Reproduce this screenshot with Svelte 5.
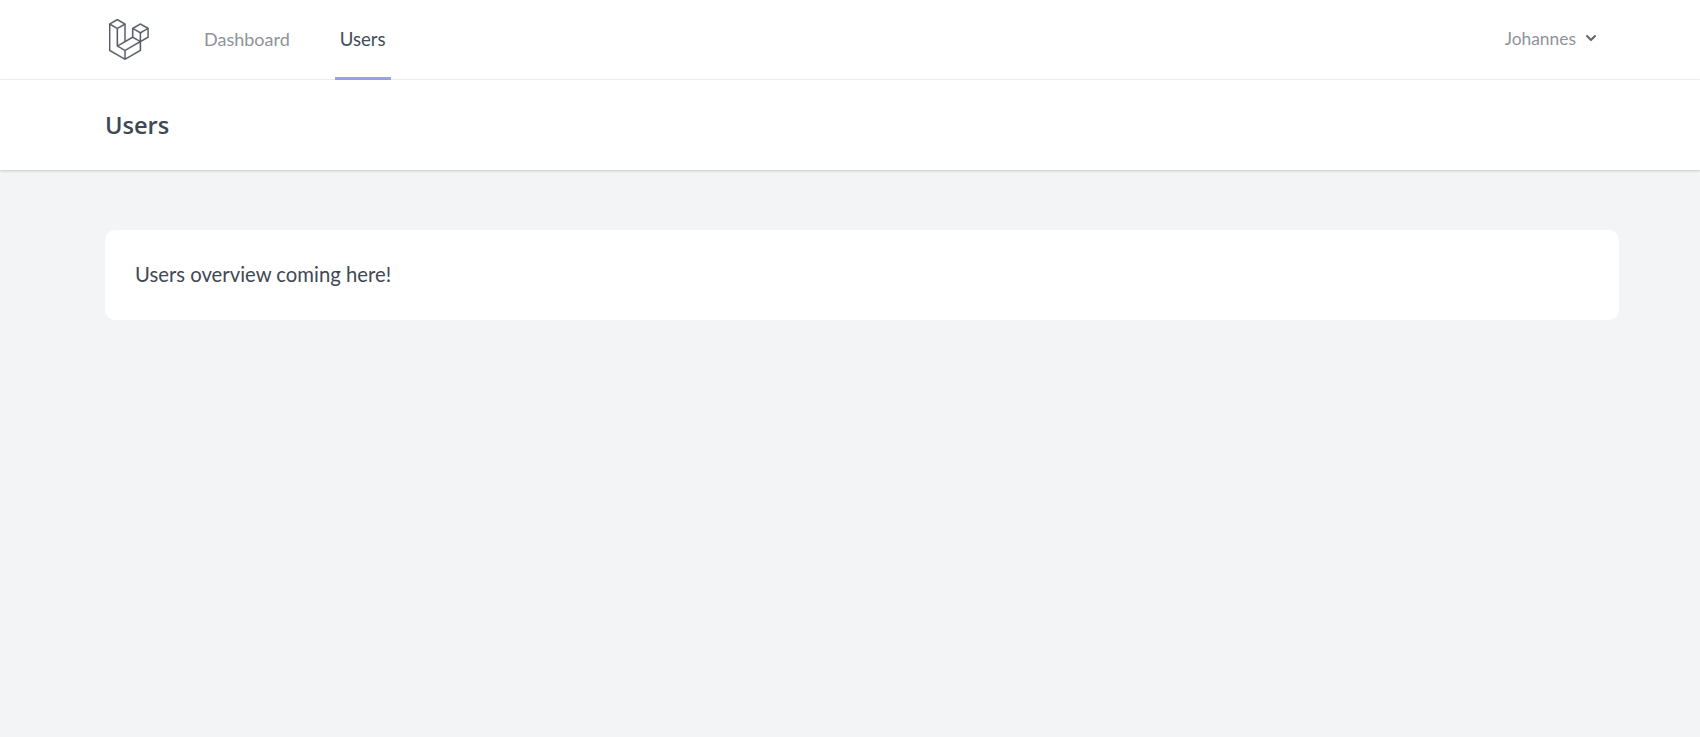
<script>
  const links = [
    { label: 'Dashboard', active: false },
    { label: 'Users', active: true }
  ];
</script>

<div class="page">
  <nav class="topbar">
    <div class="topbar-left">
      <a class="logo" href="/" aria-label="Home">
        <svg viewBox="0 0 50 52" width="40" height="41.6" fill="#555b66" stroke="#555b66" stroke-width="0.3">
          <path d="M49.626 11.564a.809.809 0 0 1 .028.209v10.972a.8.8 0 0 1-.402.694l-9.209 5.302V39.25c0 .286-.152.55-.4.694L20.42 51.01c-.044.025-.092.041-.14.058-.018.006-.035.017-.054.022a.805.805 0 0 1-.41 0c-.022-.006-.042-.018-.063-.026-.044-.016-.09-.03-.132-.054L.402 39.944A.801.801 0 0 1 0 39.25V6.334c0-.072.01-.142.028-.21.006-.023.02-.044.028-.067.015-.042.029-.085.051-.124.015-.026.037-.047.055-.071.023-.032.044-.065.071-.093.023-.023.053-.04.079-.06.029-.024.055-.05.088-.069h.001l9.61-5.533a.802.802 0 0 1 .8 0l9.61 5.533h.002c.032.02.059.045.088.068.026.02.055.038.078.06.028.029.048.062.072.094.017.024.04.045.054.071.023.04.036.082.052.124.008.023.022.044.028.068a.809.809 0 0 1 .028.209v20.559l8.008-4.611v-10.51c0-.07.01-.141.028-.208.007-.024.02-.045.028-.068.016-.042.03-.085.052-.124.015-.026.037-.047.054-.071.024-.032.044-.065.072-.093.023-.023.052-.04.078-.06.03-.024.056-.05.088-.069h.001l9.611-5.533a.801.801 0 0 1 .8 0l9.61 5.533c.034.02.06.045.09.068.025.02.054.038.077.06.028.029.048.062.072.094.018.024.04.045.054.071.023.039.036.082.052.124.009.023.022.044.028.068zm-1.574 10.718v-9.124l-3.363 1.936-4.646 2.675v9.124l8.01-4.611zm-9.61 16.505v-9.13l-4.57 2.61-13.05 7.448v9.216l17.62-10.144zM1.602 7.719v31.068L19.22 48.93v-9.214l-9.204-5.209-.003-.002-.004-.002c-.031-.018-.057-.044-.086-.066-.025-.02-.054-.036-.076-.058l-.002-.003c-.026-.025-.044-.056-.066-.084-.02-.027-.044-.05-.06-.078l-.001-.003c-.018-.03-.029-.066-.042-.1-.013-.03-.03-.058-.038-.09v-.001c-.01-.038-.012-.078-.016-.117-.004-.03-.012-.06-.012-.09v-.002-21.481L4.965 9.654 1.602 7.72zm8.81-5.994L2.405 6.334l8.005 4.609 8.006-4.61-8.006-4.608zm4.164 28.764l4.645-2.674V7.719l-3.363 1.936-4.646 2.675v20.096l3.364-1.937zM39.243 7.164l-8.006 4.609 8.006 4.609 8.005-4.61-8.005-4.608zm-.801 10.605l-4.646-2.675-3.363-1.936v9.124l4.645 2.674 3.364 1.937v-9.124zM20.02 38.33l11.743-6.704 5.87-3.35-8-4.606-9.211 5.303-8.395 4.833 7.993 4.524z" />
        </svg>
      </a>
      <ul class="links">
        {#each links as link}
          <li class="link" class:active={link.active}>{link.label}</li>
        {/each}
      </ul>
    </div>
    <button class="user" type="button">
      Johannes
      <svg viewBox="0 0 20 20" width="20" height="20" fill="#5f6670">
        <path fill-rule="evenodd" clip-rule="evenodd" d="M5.293 7.293a1 1 0 011.414 0L10 10.586l3.293-3.293a1 1 0 111.414 1.414l-4 4a1 1 0 01-1.414 0l-4-4a1 1 0 010-1.414z" />
      </svg>
    </button>
  </nav>

  <header class="page-header">
    <h1>Users</h1>
  </header>

  <main class="content">
    <div class="card">Users overview coming here!</div>
  </main>
</div>

<style>
  :global(body) {
    margin: 0;
    background: #f3f4f6;
  }

  .page {
    min-height: 737px;
    background: #f3f4f6;
    font-family: 'Lato', 'Open Sans', sans-serif;
    color: #3f4754;
  }

  .topbar {
    height: 79px;
    background: #fff;
    border-bottom: 1px solid #f1f2f4;
    display: flex;
    justify-content: space-between;
    padding: 0 99px 0 109px;
  }

  .topbar-left {
    display: flex;
    align-items: stretch;
  }

  .logo {
    display: flex;
    align-items: center;
  }

  .links {
    display: flex;
    list-style: none;
    margin: 0 0 0 50px;
    padding: 0;
    gap: 40px;
  }

  .link {
    display: flex;
    align-items: center;
    height: 80px;
    box-sizing: border-box;
    padding: 1px 5px 0;
    font-size: 18px;
    color: #8f9399;
    border-bottom: 3px solid transparent;
  }

  .link.active {
    color: #454c58;
    font-size: 18.6px;
    border-bottom-color: #9aa3ea;
  }

  .user {
    display: flex;
    align-items: center;
    gap: 5px;
    height: 76px;
    padding: 0;
    background: none;
    border: 0;
    font: inherit;
    font-size: 17.4px;
    color: #8f9399;
  }

  .page-header {
    background: #fff;
    height: 90px;
    display: flex;
    align-items: center;
    padding-left: 105px;
    box-sizing: border-box;
    box-shadow: 0 1px 3px rgba(0, 0, 0, 0.14), 0 1px 2px rgba(0, 0, 0, 0.05);
    position: relative;
  }

  h1 {
    margin: 0;
    font-family: 'Open Sans', 'Lato', sans-serif;
    font-size: 23.6px;
    font-weight: 600;
    color: #3f4754;
  }

  .content {
    padding: 60px 81px 0 105px;
  }

  .card {
    height: 90px;
    box-sizing: border-box;
    display: flex;
    align-items: center;
    padding: 0 0 2px 30px;
    background: #fff;
    border-radius: 10px;
    font-size: 20.3px;
    color: #3f4754;
  }
</style>
